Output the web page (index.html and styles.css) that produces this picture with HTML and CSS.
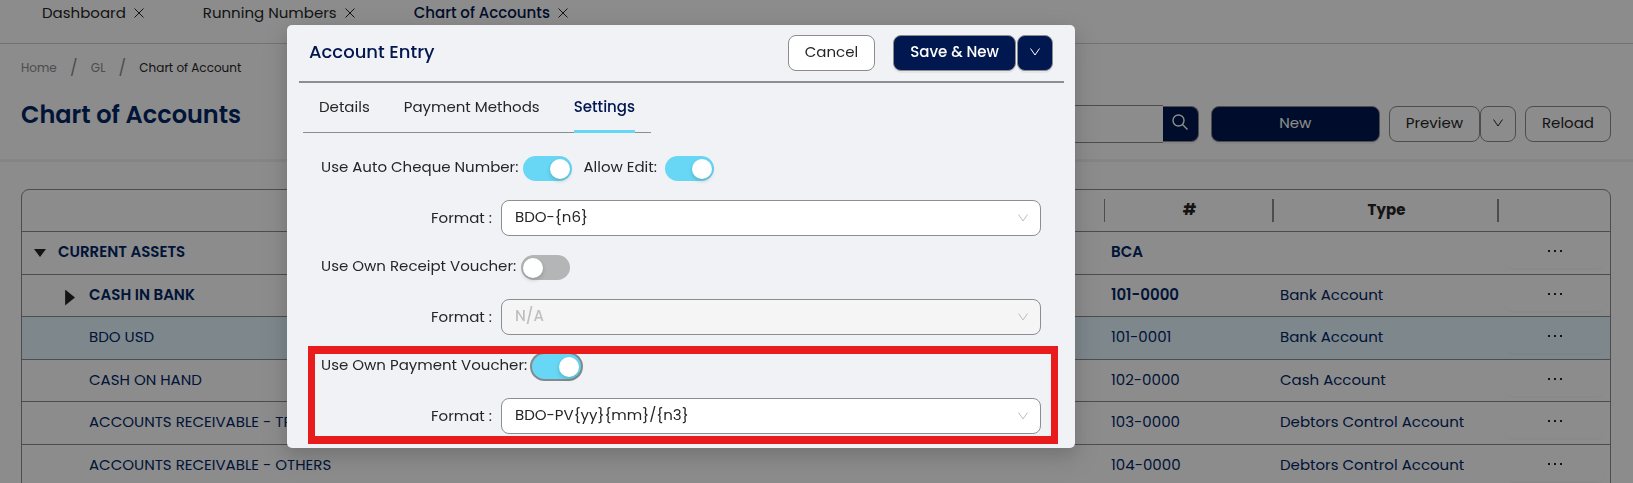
FILE: index.html
```html
<!DOCTYPE html>
<html lang="en">
<head>
  <meta charset="UTF-8">
  <meta name="viewport" content="width=device-width, initial-scale=1.0">
  <title>Chart of Accounts</title>
  <link rel="stylesheet" href="styles.css">
</head>
<body>
  <svg class="sprite" aria-hidden="true">
    <symbol id="close" viewBox="0 0 10 10"><path d="M.5.5l9 9M9.500.5l-9 9"/></symbol>
    <symbol id="down" viewBox="0 0 10 10"><path d="M.5 1.500L5 8l4.500-6.500"/></symbol>
    <symbol id="dots" viewBox="0 0 16 4"><path d="M1 1h2v2H1zM7 1h2v2H7zM13 1h2v2h-2z"/></symbol>
  </svg>

  <nav class="page-tabs">
    <div class="page-tab"><a href="#">Dashboard</a><button aria-label="Close Dashboard"><svg class="icon"><use href="#close"/></svg></button></div>
    <div class="page-tab"><a href="#">Running Numbers</a><button aria-label="Close Running Numbers"><svg class="icon"><use href="#close"/></svg></button></div>
    <div class="page-tab active"><a href="#">Chart of Accounts</a><button aria-label="Close Chart of Accounts"><svg class="icon"><use href="#close"/></svg></button></div>
  </nav>

  <header class="page-header">
    <div class="heading">
      <div class="breadcrumb">
        <a href="#">Home</a><span class="slash">/</span><a href="#">GL</a><span class="slash">/</span><span class="current">Chart of Account</span>
      </div>
      <h1>Chart of Accounts</h1>
    </div>
    <div class="toolbar">
      <div class="search">
        <input type="text" aria-label="Search accounts">
        <button class="btn primary" aria-label="Search">
          <svg class="search-icon" viewBox="0 0 16 16"><circle cx="6.500" cy="6.500" r="5.500"/><path d="M10.500 10.500l5 5"/></svg>
        </button>
      </div>
      <button class="btn primary new">New</button>
      <div class="split">
        <button class="btn">Preview</button>
        <button class="btn square" aria-label="More preview options"><svg class="icon"><use href="#down"/></svg></button>
      </div>
      <button class="btn">Reload</button>
    </div>
  </header>

  <main class="content">
    <table class="accounts">
      <colgroup>
        <col>
        <col class="col-code">
        <col class="col-type">
        <col class="col-actions">
      </colgroup>
      <thead>
        <tr><th></th><th>#</th><th>Type</th><th></th></tr>
      </thead>
      <tbody>
        <tr class="group">
          <td><div class="tree"><button class="toggle open" aria-label="Collapse"></button>CURRENT ASSETS</div></td>
          <td>BCA</td><td></td>
          <td><button class="more" aria-label="Actions"><svg><use href="#dots"/></svg></button></td>
        </tr>
        <tr class="group">
          <td><div class="tree level-1"><button class="toggle" aria-label="Expand"></button>CASH IN BANK</div></td>
          <td>101-0000</td><td class="type">Bank Account</td>
          <td><button class="more" aria-label="Actions"><svg><use href="#dots"/></svg></button></td>
        </tr>
        <tr class="selected">
          <td><div class="tree leaf">BDO USD</div></td>
          <td>101-0001</td><td>Bank Account</td>
          <td><button class="more" aria-label="Actions"><svg><use href="#dots"/></svg></button></td>
        </tr>
        <tr>
          <td><div class="tree leaf">CASH ON HAND</div></td>
          <td>102-0000</td><td>Cash Account</td>
          <td><button class="more" aria-label="Actions"><svg><use href="#dots"/></svg></button></td>
        </tr>
        <tr>
          <td><div class="tree leaf">ACCOUNTS RECEIVABLE - TRADE</div></td>
          <td>103-0000</td><td>Debtors Control Account</td>
          <td><button class="more" aria-label="Actions"><svg><use href="#dots"/></svg></button></td>
        </tr>
        <tr>
          <td><div class="tree leaf">ACCOUNTS RECEIVABLE - OTHERS</div></td>
          <td>104-0000</td><td>Debtors Control Account</td>
          <td><button class="more" aria-label="Actions"><svg><use href="#dots"/></svg></button></td>
        </tr>
      </tbody>
    </table>
  </main>

  <div class="overlay">
    <section class="modal" role="dialog" aria-labelledby="modalTitle">
      <div class="modal-header">
        <h2 id="modalTitle">Account Entry</h2>
        <button class="btn cancel">Cancel</button>
        <div class="split">
          <button class="btn primary strong">Save &amp; New</button>
          <button class="btn primary square" aria-label="More save options"><svg class="icon"><use href="#down"/></svg></button>
        </div>
      </div>

      <div class="modal-tabs">
        <button>Details</button>
        <button>Payment Methods</button>
        <button class="active">Settings</button>
      </div>

      <form class="settings">
        <div class="setting">
          <div class="switch-row">
            <label for="autoCheque">Use Auto Cheque Number:</label>
            <input class="switch" type="checkbox" id="autoCheque" checked>
            <label for="allowEdit">Allow Edit:</label>
            <input class="switch" type="checkbox" id="allowEdit" checked>
          </div>
          <div class="format-row">
            <label for="chequeFormat">Format :</label>
            <div class="select">
              <select id="chequeFormat"><option>BDO-{n6}</option></select>
              <svg class="icon"><use href="#down"/></svg>
            </div>
          </div>
        </div>

        <div class="setting">
          <div class="switch-row">
            <label for="ownReceipt">Use Own Receipt Voucher:</label>
            <input class="switch" type="checkbox" id="ownReceipt">
          </div>
          <div class="format-row">
            <label for="receiptFormat">Format :</label>
            <div class="select">
              <select id="receiptFormat" disabled><option>N/A</option></select>
              <svg class="icon"><use href="#down"/></svg>
            </div>
          </div>
        </div>

        <div class="setting marked">
          <div class="switch-row">
            <label for="ownPayment">Use Own Payment Voucher:</label>
            <input class="switch focused" type="checkbox" id="ownPayment" checked>
          </div>
          <div class="format-row">
            <label for="paymentFormat">Format :</label>
            <div class="select">
              <select id="paymentFormat"><option>BDO-PV{yy}{mm}/{n3}</option></select>
              <svg class="icon"><use href="#down"/></svg>
            </div>
          </div>
        </div>
      </form>
    </section>
  </div>
</body>
</html>
```
FILE: styles.css
```css
* {
  box-sizing: border-box;
}
body {
  margin: 0;
  height: 100vh;
  overflow: hidden;
  font-family: Poppins, Inter, sans-serif;
  font-size: 15px;
  line-height: 20px;
  color: #262626;
  background: #fff;
}
button, input, select {
  font: inherit;
  color: inherit;
}
button {
  cursor: pointer;
}
a {
  color: inherit;
  text-decoration: none;
}
.sprite {
  display: none;
}
.icon {
  display: block;
  width: 10px;
  height: 10px;
  fill: none;
  stroke: currentColor;
}

/* open pages */
.page-tabs {
  display: flex;
  gap: 59px;
  height: 44px;
  padding: 3px 42px 0;
  border-bottom: 1px solid #d0d0d0;
}
.page-tab {
  display: flex;
  align-items: center;
  gap: 8px;
  height: 20px;
}
.page-tab button {
  padding: 0;
  border: 0;
  background: none;
}
.page-tab.active a {
  color: #00174f;
  font-weight: 500;
}

/* page header */
.page-header {
  display: flex;
  justify-content: space-between;
  height: 118px;
  padding: 14px 22px 0 21px;
  border-bottom: 3px solid #f2f2f2;
}
.breadcrumb {
  display: flex;
  font-size: 12px;
  color: #8c8c8c;
}
.slash {
  width: 34px;
  font-size: 16px;
  text-align: center;
}
.breadcrumb .current {
  color: #262626;
}
h1 {
  margin: 20px 0 0;
  font-size: 24px;
  font-weight: 600;
  line-height: 34px;
  color: #002766;
}
.toolbar {
  display: flex;
  align-items: center;
  gap: 9px;
  height: 38px;
  margin-top: 47px;
}
.search {
  display: flex;
  align-items: center;
  margin-right: 3px;
}
.search input {
  width: 320px;
  height: 38px;
  border: 1px solid #8c8c8c;
  border-right: 0;
  border-radius: 8px 0 0 8px;
  background: #fff;
}
.search .btn {
  width: 36px;
  padding: 0 0 4px 9px;
  border-left: 0;
  border-radius: 0 8px 8px 0;
}
.search-icon {
  display: block;
  width: 16px;
  height: 16px;
  fill: none;
  stroke: currentColor;
  stroke-width: 1.4;
}
.btn {
  height: 36px;
  padding: 0 16px 2px;
  border: 1px solid #8c8c8c;
  border-radius: 8px;
  background: #fff;
  white-space: nowrap;
}
.btn.primary {
  color: #fff;
  background: #00174f;
  box-shadow: 0 2px 0 rgba(0, 0, 0, 0.05);
}
.btn.strong {
  font-weight: 500;
}
.btn.square {
  width: 36px;
  padding: 0 12px 2px;
}
.btn.new {
  width: 169px;
}
.split {
  display: flex;
}

/* accounts table */
.content {
  padding: 27px 22px 0 21px;
}
.accounts {
  width: 100%;
  table-layout: fixed;
  border: 1px solid #8c8c8c;
  border-radius: 8px 8px 0 0;
  border-spacing: 0;
  color: #002766;
}
.col-code {
  width: 169px;
}
.col-type {
  width: 225px;
}
.col-actions {
  width: 111px;
}
.accounts th, .accounts td {
  height: 42px;
  padding: 0 6px 2px;
  border-bottom: 1px solid #8c8c8c;
  text-align: left;
}
.accounts tr:nth-child(odd) td {
  height: 43px;
}
.accounts th {
  text-align: center;
  color: #262626;
  background: linear-gradient(#8c8c8c, #8c8c8c) right center / 2px 23px no-repeat;
}
.accounts th:first-child {
  background-size: 1px 23px;
}
.accounts th:last-child {
  background: none;
}
.accounts .group td {
  font-weight: 600;
}
.accounts .group .type {
  font-weight: 400;
}
.accounts .selected td {
  background: #e4f6ff;
}
.tree {
  display: flex;
  align-items: center;
  gap: 12px;
  padding-left: 6px;
}
.tree.level-1 {
  padding-left: 36px;
  gap: 14px;
}
.tree.leaf {
  padding-left: 61px;
}
.toggle {
  width: 11px;
  height: 16px;
  padding: 0;
  border: 0;
  background: #262626;
  clip-path: polygon(10% 0, 100% 50%, 10% 100%);
}
.level-1 .toggle {
  margin-top: 6px;
}
.toggle.open {
  width: 12px;
  height: 8px;
  margin-top: 2px;
  clip-path: polygon(0 0, 100% 0, 50% 100%);
}
.more {
  display: block;
  width: 100px;
  height: 32px;
  padding: 0 0 2px;
  border: 0;
  border-radius: 8px;
  background: transparent;
  box-shadow: 0 2px 0 rgba(0, 0, 0, 0.02);
}
.more svg {
  display: block;
  width: 16px;
  height: 4px;
  margin: 0 auto;
  fill: #262626;
}

/* account entry dialog */
.overlay {
  position: fixed;
  inset: 0;
  padding: 25px 20px 0 287px;
  background: rgba(0, 0, 0, 0.45);
}
.modal {
  max-width: 788px;
  padding: 0 11px 5px 12px;
  border-radius: 5px;
  background: #f0f2f6;
  box-shadow: 0 6px 16px rgba(0, 0, 0, 0.12), 0 9px 28px 8px rgba(0, 0, 0, 0.08);
}
.modal-header {
  display: flex;
  align-items: center;
  gap: 18px;
  height: 58px;
  padding: 0 11px 0 10px;
  border-bottom: 2px solid #8c8f91;
}
.modal-header .split {
  gap: 1px;
}
h2 {
  flex: 1;
  margin: 0;
  padding-bottom: 2px;
  font-size: 18px;
  font-weight: 500;
  line-height: 24px;
  color: #00174f;
}
.modal-tabs {
  display: flex;
  gap: 34px;
  width: max-content;
  margin-left: 4px;
  padding: 0 16px;
  border-bottom: 1px solid #8c8f91;
}
.modal-tabs button {
  height: 50px;
  margin-bottom: -1px;
  padding: 1px 0 0;
  border: 0;
  border-bottom: 3px solid transparent;
  background: none;
}
.modal-tabs .active {
  border-bottom-color: #67d7f5;
  font-weight: 500;
  color: #00174f;
}
.settings {
  padding: 13px 6px 0 9px;
}
.setting {
  padding: 6px 17px 9px 13px;
}
.switch-row {
  display: flex;
  gap: 5px;
  align-items: center;
  height: 29px;
}
.switch-row .switch + label {
  margin: 0 3px 0 6px;
}
.switch {
  appearance: none;
  width: 49px;
  height: 25px;
  margin: 3px 0 0;
  padding: 3px 2px;
  border-radius: 13px;
  background: #b4b5b7;
}
.switch::before {
  content: "";
  display: block;
  width: 20px;
  height: 20px;
  border-radius: 50%;
  background: #fff;
  box-shadow: 0 2px 4px rgba(0, 35, 11, 0.2);
}
.switch:checked {
  background: #67d7f5;
}
.switch:checked::before {
  margin-left: auto;
}
.switch.focused {
  box-shadow: 0 0 0 2px #84898d;
}
.format-row {
  display: flex;
  align-items: center;
  gap: 9px;
  margin-top: 19px;
}
.format-row label {
  width: 171px;
  text-align: right;
}
.select {
  flex: 1;
  display: grid;
  align-items: center;
}
.select select {
  grid-area: 1 / 1;
  appearance: none;
  width: 100%;
  height: 36px;
  padding: 0 13px 2px;
  border: 1px solid #8c8f91;
  border-radius: 8px;
  background: #fff;
}
.select select:disabled {
  opacity: 1;
  font-weight: 500;
  color: #bfbfbf;
  background: #f5f5f5;
}
.select .icon {
  grid-area: 1 / 1;
  justify-self: end;
  margin-right: 13px;
  color: #bfbfbf;
  pointer-events: none;
}

/* red frame drawn over the setting */
.marked {
  position: relative;
}
.marked::after {
  content: "";
  position: absolute;
  inset: 2px 0 -1px;
  border: 8px solid #e81c1c;
  border-width: 8px 7px;
  pointer-events: none;
}
```
